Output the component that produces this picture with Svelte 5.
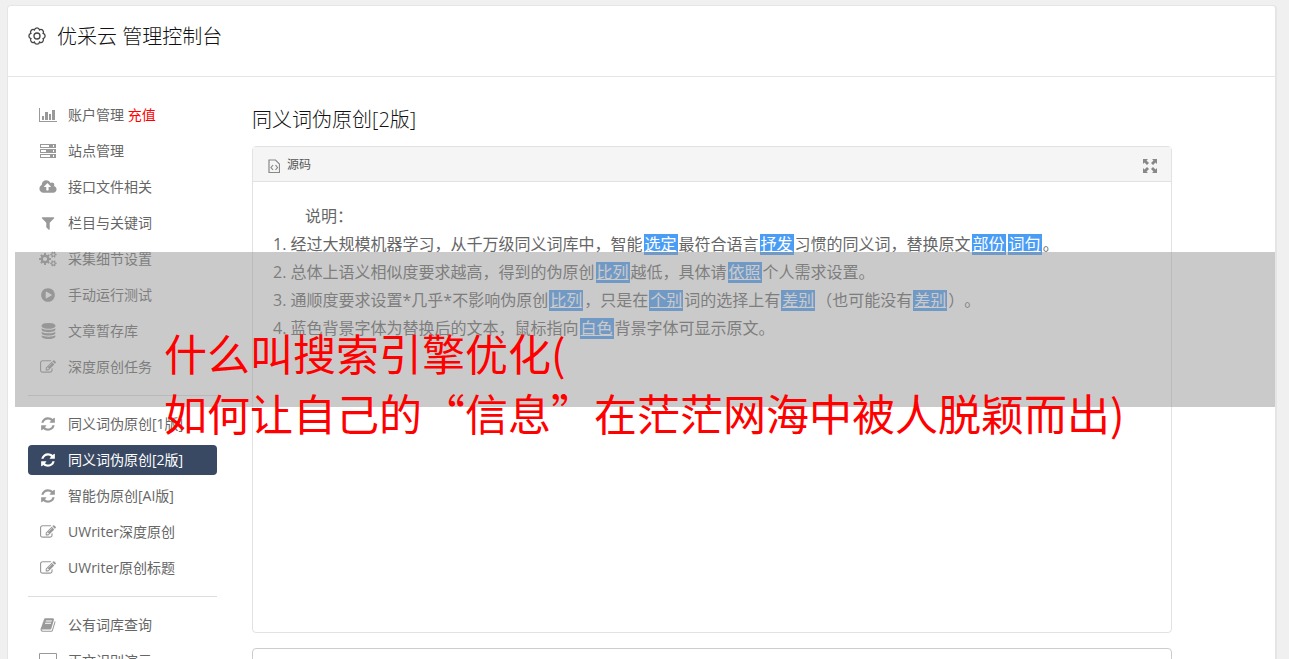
<script lang="ts">
	interface MenuItem {
		icon: string;
		label: string;
		extra?: string;
		active?: boolean;
	}

	const groups: MenuItem[][] = [
		[
			{ icon: 'chart', label: '账户管理', extra: '充值' },
			{ icon: 'server', label: '站点管理' },
			{ icon: 'cloud', label: '接口文件相关' },
			{ icon: 'filter', label: '栏目与关键词' },
			{ icon: 'cogs', label: '采集细节设置' },
			{ icon: 'play', label: '手动运行测试' },
			{ icon: 'database', label: '文章暂存库' },
			{ icon: 'edit', label: '深度原创任务' }
		],
		[
			{ icon: 'refresh', label: '同义词伪原创[1版]' },
			{ icon: 'refresh', label: '同义词伪原创[2版]', active: true },
			{ icon: 'refresh', label: '智能伪原创[AI版]' },
			{ icon: 'edit', label: 'UWriter深度原创' },
			{ icon: 'edit', label: 'UWriter原创标题' }
		],
		[
			{ icon: 'book', label: '公有词库查询' },
			{ icon: 'laptop', label: '正文识别演示' }
		]
	];

	// text wrapped in {} is a replaced synonym
	const notes = [
		'经过大规模机器学习，从千万级同义词库中，智能{选定}最符合语言{抒发}习惯的同义词，替换原文{部份}{词句}。',
		'总体上语义相似度要求越高，得到的伪原创{比列}越低，具体请{依照}个人需求设置。',
		'通顺度要求设置*几乎*不影响伪原创{比列}，只是在{个别}词的选择上有{差别}（也可能没有{差别}）。',
		'蓝色背景字体为替换后的文本，鼠标指向{白色}背景字体可显示原文。'
	].map((line) =>
		line
			.split(/(\{.*?\})/)
			.filter(Boolean)
			.map((part) => ({ text: part.replace(/[{}]/g, ''), replaced: part.startsWith('{') }))
	);

	function gear(cx: number, cy: number, outer: number, inner: number, teeth = 8) {
		const step = (Math.PI * 2) / teeth;
		const points: string[] = [];
		for (let i = 0; i < teeth; i++) {
			for (const [offset, r] of [[-0.32, inner], [-0.2, outer], [0.2, outer], [0.32, inner]]) {
				const a = (i + offset) * step;
				points.push(`${(cx + r * Math.cos(a)).toFixed(2)} ${(cy + r * Math.sin(a)).toFixed(2)}`);
			}
		}
		return `M${points.join('L')}Z`;
	}

	// closed outline with round lobes
	function scallop(c: number, r: number, lobes = 8) {
		let d = '';
		for (let i = 0; i <= lobes; i++) {
			const a = ((i - 0.5) * Math.PI * 2) / lobes;
			const p = `${(c + r * Math.cos(a)).toFixed(2)} ${(c + r * Math.sin(a)).toFixed(2)}`;
			d += i === 0 ? `M${p}` : `A2.6 2.6 0 0 1 ${p}`;
		}
		return d + 'Z';
	}

	function hole(cx: number, cy: number, r: number) {
		return `M${cx - r} ${cy}a${r} ${r} 0 1 0 ${r * 2} 0a${r} ${r} 0 1 0 ${-r * 2} 0Z`;
	}

	const icons: Record<string, { box: string; w: number; h: number; d: string }> = {
		chart: {
			box: '0 0 18 16', w: 18, h: 16,
			d: 'M0 1h1v13h17v1H0zM3 9h2v4H3zM6 5h3v8H6zM10 7h2v6h-2zM13 3h3v10h-3z'
		},
		server: {
			box: '0 0 16 14', w: 16, h: 14,
			d: 'M0 0h16v4H0zM1 1v2h8V1zM13 1v2h1V1zM0 5h16v4H0zM1 6v2h5V6zM13 6v2h1V6zM0 10h16v4H0zM1 11v2h9v-2zM13 11v2h1v-2z'
		},
		cloud: {
			box: '0 0 1920 1792', w: 18, h: 16,
			d: 'M1280 864q0-14-9-23l-352-352q-9-9-23-9t-23 9l-351 351q-10 12-10 24 0 14 9 23t23 9h224v352q0 13 9.500 22.500t22.500 9.500h192q13 0 22.500-9.500t9.500-22.500v-352h224q13 0 22.500-9.500t9.500-22.500zm640 288q0 159-112.500 271.500t-271.500 112.500h-1088q-185 0-316.500-131.500t-131.500-316.500q0-130 70-240t188-165q-2-30-2-43 0-212 150-362t362-150q156 0 285.500 87t188.500 231q71-62 166-62 106 0 181 75t75 181q0 76-41 138 130 31 213.500 135.500t83.500 238.500z'
		},
		filter: {
			box: '0 0 1792 1792', w: 16, h: 16,
			d: 'M1595 295q17 41-14 70l-493 493v742q0 42-39 59-13 5-25 5-27 0-45-19l-256-256q-19-19-19-45v-486l-493-493q-31-29-14-70 17-39 59-39h1280q42 0 59 39z'
		},
		cogs: {
			box: '0 0 18 16', w: 18, h: 16,
			d: gear(6, 8, 6, 4.4) + hole(6, 8, 2.1) + gear(14.4, 3.6, 3.3, 2.3, 6) + hole(14.4, 3.6, 1.1) + gear(14.4, 12.4, 3.3, 2.3, 6) + hole(14.4, 12.4, 1.1)
		},
		play: {
			box: '0 0 1792 1792', w: 16, h: 16,
			d: 'M896 128q209 0 385.500 103t279.500 279.500 103 385.500-103 385.500-279.500 279.500-385.500 103-385.500-103-279.500-279.500-103-385.500 103-385.500 279.500-279.500 385.500-103zm384 823q32-18 32-55t-32-55l-544-320q-31-19-64-1-32 19-32 56v640q0 37 32 56 16 8 32 8 17 0 32-9z'
		},
		database: {
			box: '0 0 1664 1792', w: 15, h: 16,
			d: 'M832 768q237 0 443-43t325-127v170q0 69-103 128t-280 93.500-385 34.500-385-34.500-280-93.500-103-128v-170q119 84 325 127t443 43zm0 768q237 0 443-43t325-127v170q0 69-103 128t-280 93.500-385 34.500-385-34.500-280-93.500-103-128v-170q119 84 325 127t443 43zm0-384q237 0 443-43t325-127v170q0 69-103 128t-280 93.500-385 34.500-385-34.500-280-93.500-103-128v-170q119 84 325 127t443 43zm0-1152q208 0 385 34.500t280 93.500 103 128v128q0 69-103 128t-280 93.500-385 34.500-385-34.500-280-93.500-103-128v-128q0-69 103-128t280-93.500 385-34.500z'
		},
		edit: {
			box: '0 0 1792 1792', w: 16, h: 16,
			d: 'M888 1184l116-116-152-152-116 116v56h96v96h56zm440-720q-16-16-33 1l-350 350q-17 17-1 33t33-1l350-350q17-17 1-33zm80 594v190q0 119-84.500 203.500t-203.500 84.500h-832q-119 0-203.500-84.500t-84.500-203.500v-832q0-119 84.500-203.500t203.500-84.500h832q63 0 117 25 15 7 18 23 3 17-9 29l-49 49q-14 14-32 8-23-6-45-6h-832q-66 0-113 47t-47 113v832q0 66 47 113t113 47h832q66 0 113-47t47-113v-126q0-13 9-22l64-64q15-15 35-7t20 29zm-96-738l288 288-672 672h-288v-288zm444 132l-92 92-288-288 92-92q28-28 68-28t68 28l152 152q28 28 28 68t-28 68z'
		},
		refresh: {
			box: '0 0 1792 1792', w: 16, h: 16,
			d: 'M1639 1056q0 5-1 7-64 268-268 434.500t-478 166.500q-146 0-282.500-55t-243.500-157l-129 129q-19 19-45 19t-45-19-19-45v-448q0-26 19-45t45-19h448q26 0 45 19t19 45-19 45l-137 137q71 66 161 102t187 36q134 0 250-65t186-179q11-17 53-117 8-23 30-23h192q13 0 22.500 9.500t9.500 22.500zm25-800v448q0 26-19 45t-45 19h-448q-26 0-45-19t-19-45 19-45l138-138q-148-137-349-137-134 0-250 65t-186 179q-11 17-53 117-8 23-30 23h-199q-13 0-22.500-9.500t-9.500-22.500v-7q65-268 270-434.500t480-166.500q146 0 284 55.500t245 156.500l130-129q19-19 45-19t45 19 19 45z'
		},
		book: {
			box: '0 0 1792 1792', w: 16, h: 16,
			d: 'M1703 478q40 57 18 129l-275 906q-19 64-76.500 107.500t-122.500 43.500h-923q-77 0-148.500-53.500t-99.500-131.500q-24-67-2-127 0-4 3-27t4-37q1-8-3-21.500t-3-19.500q2-11 8-21t16.500-23.500 16.500-23.500q23-38 45-91.500t30-91.500q3-10 .5-30t-.5-28q3-11 17-28t17-23q21-36 42-92t25-90q1-9-2.500-32t.5-28q4-13 22-30.500t22-22.500q19-26 42.500-84.500t27.500-96.500q1-8-3-25.500t-2-26.500q2-8 9-18t18-23 17-21q8-12 16.500-30.500t15-35 16-36 19.500-32 26.500-23.500 36-11.500 47.500 5.500l-1 3q38-9 51-9h761q74 0 114 56t18 130l-274 906q-36 119-71.500 153.500t-128.500 34.500h-869q-27 0-38 15-11 16-1 43 24 70 144 70h923q29 0 56-15.500t35-41.500l300-987q7-22 5-57 38 15 59 43zm-1064 2q-4 13 2 22.500t20 9.500h608q13 0 25.500-9.500t16.500-22.500l21-64q4-13-2-22.500t-20-9.500h-608q-13 0-25.500 9.500t-16.500 22.500zm-83 256q-4 13 2 22.500t20 9.500h608q13 0 25.500-9.500t16.500-22.500l21-64q4-13-2-22.500t-20-9.500h-608q-13 0-25.500 9.500t-16.500 22.500z'
		},
		laptop: {
			box: '0 0 18 16', w: 18, h: 16,
			d: 'M1 0h16q1 0 1 1v11q0 1-1 1H1q-1 0-1-1V1q0-1 1-1zM1 1v10h16V1zM6 14h6v2H6z'
		}
	};
</script>

<div class="page">
	<div class="card">
		<header class="top">
			<svg class="logo" viewBox="0 0 18 18" aria-hidden="true">
				<path d={scallop(9, 6.6)} />
				<circle cx="9" cy="9" r="3" />
			</svg>
			<h1>优采云 管理控制台</h1>
		</header>

		<div class="columns">
			<nav>
				{#each groups as group, i}
					{#if i > 0}
						<hr />
					{/if}
					{#each group as item}
						<a href="#top" class="item" class:active={item.active}>
							<span class="icon">
								<svg viewBox={icons[item.icon].box} width={icons[item.icon].w} height={icons[item.icon].h} aria-hidden="true">
									<path fill-rule="evenodd" d={icons[item.icon].d} />
								</svg>
							</span>
							<span>{item.label}{#if item.extra}&nbsp;<span class="extra">{item.extra}</span>{/if}</span>
						</a>
					{/each}
				{/each}
			</nav>

			<main>
				<h2>同义词伪原创[2版]</h2>
				<section class="editor">
					<div class="toolbar">
						<button type="button">
							<svg width="12" height="14" viewBox="0 0 12 14" aria-hidden="true">
								<path class="line" d="M1 1h6.500l4 4v8.500H1z" />
								<path class="line" d="M5 6L3 8.500 5 11M7.500 6l2 2.500-2 2.500" />
							</svg>
							源码
						</button>
						<button type="button" aria-label="全屏">
							<svg width="14" height="14" viewBox="0 0 14 14" aria-hidden="true">
								<path d="M0 0h5L3.500 1.500 6 4 4 6 1.500 3.500 0 5zM14 0v5l-1.500-1.500L10 6 8 4l2.500-2.500L9 0zM0 14V9l1.500 1.500L4 8l2 2-2.500 2.500L5 14zM14 14H9l1.500-1.500L8 10l2-2 2.500 2.500L14 9z" />
							</svg>
						</button>
					</div>
					<div class="text">
						<p>说明：</p>
						<ol>
							{#each notes as note}
								<li>{#each note as part}{#if part.replaced}<span class="word">{part.text}</span>{:else}{part.text}{/if}{/each}</li>
							{/each}
						</ol>
					</div>
				</section>
				<section class="next"></section>
			</main>
		</div>
	</div>

	<div class="banner"></div>
	<div class="headline">什么叫搜索引擎优化(<br />如何让自己的“信息”在茫茫网海中被人脱颖而出)</div>
</div>

<style>
	:global(body) {
		margin: 0;
		background: #f0f0f0;
	}

	.page {
		position: relative;
		height: 100vh;
		overflow: hidden;
		box-sizing: border-box;
		padding: 5px 12px 0 7px;
		font-family: 'Open Sans', 'Noto Sans CJK SC', sans-serif;
		font-size: 14px;
		color: #666;
		text-spacing-trim: space-all;
	}

	.card {
		background: #fff;
		border: 1px solid #e5e5e5;
		border-right-width: 2px;
		border-radius: 4px;
	}

	.top {
		display: flex;
		align-items: center;
		gap: 11px;
		height: 62px;
		padding: 0 20px 8px;
		border-bottom: 1px solid #e5e5e5;
	}

	.logo {
		width: 18px;
		height: 18px;
		margin-bottom: 2px;
		fill: none;
		stroke: #444;
		stroke-width: 1.3;
	}

	h1,
	h2 {
		margin: 0;
		font-size: 20px;
		font-weight: 300;
		line-height: 28px;
		color: #111;
	}

	.columns {
		display: flex;
		gap: 35px;
		padding: 23px 103px 0 20px;
	}

	nav {
		display: flex;
		flex-direction: column;
		flex: 0 0 189px;
		gap: 6px;
	}

	hr {
		width: 100%;
		margin: 7px 0;
		border: 0;
		border-top: 1px solid #ddd;
	}

	.item {
		display: flex;
		align-items: center;
		gap: 10px;
		height: 30px;
		padding-left: 10px;
		border-radius: 4px;
		color: #666;
		line-height: 30px;
		text-decoration: none;
		white-space: nowrap;
	}

	.icon {
		display: flex;
		justify-content: center;
		width: 20px;
		flex-shrink: 0;
	}

	.icon svg {
		fill: #999;
	}

	.extra {
		color: #f00;
	}

	.active {
		background: #394963;
		color: #fff;
	}

	.active svg {
		fill: #fff;
	}

	main {
		flex: 1;
		min-width: 0;
		padding-top: 6px;
	}

	.editor {
		margin-top: 12px;
		border: 1px solid #e2e2e2;
		border-radius: 4px;
	}

	.toolbar {
		display: flex;
		align-items: center;
		justify-content: space-between;
		height: 34px;
		padding: 0 14px 0 15px;
		background: #f5f5f5;
		border-bottom: 1px solid #e2e2e2;
	}

	.toolbar button {
		display: flex;
		align-items: center;
		gap: 7px;
		padding: 0;
		border: 0;
		background: none;
		font: inherit;
		font-size: 12px;
		color: #555;
	}

	.toolbar svg {
		margin-top: 4px;
		fill: #888;
	}

	.toolbar .line {
		fill: none;
		stroke: #888;
		stroke-width: 1.2;
	}

	.text {
		min-height: 410px;
		padding: 20px;
		font-size: 16px;
		line-height: 28px;
	}

	.text p {
		margin: 0;
		text-indent: 2em;
	}

	ol {
		margin: 0;
		padding: 0;
		list-style-position: inside;
	}

	.word {
		display: inline-block;
		margin: 0 1px;
		padding: 0 1px;
		background: #4a9df5;
		color: #fff;
		line-height: 21px;
		text-decoration: underline;
	}

	.next {
		height: 60px;
		margin-top: 15px;
		border: 1px solid #ccc;
		border-radius: 4px;
	}

	.banner {
		position: absolute;
		top: 252px;
		right: 14px;
		left: 15px;
		height: 155px;
		background: rgba(150, 150, 150, 0.5);
	}

	.headline {
		position: absolute;
		top: 322px;
		left: 164px;
		font-family: 'Noto Sans CJK SC', sans-serif;
		font-size: 43px;
		line-height: 60px;
		color: #f00;
		white-space: nowrap;
	}
</style>
